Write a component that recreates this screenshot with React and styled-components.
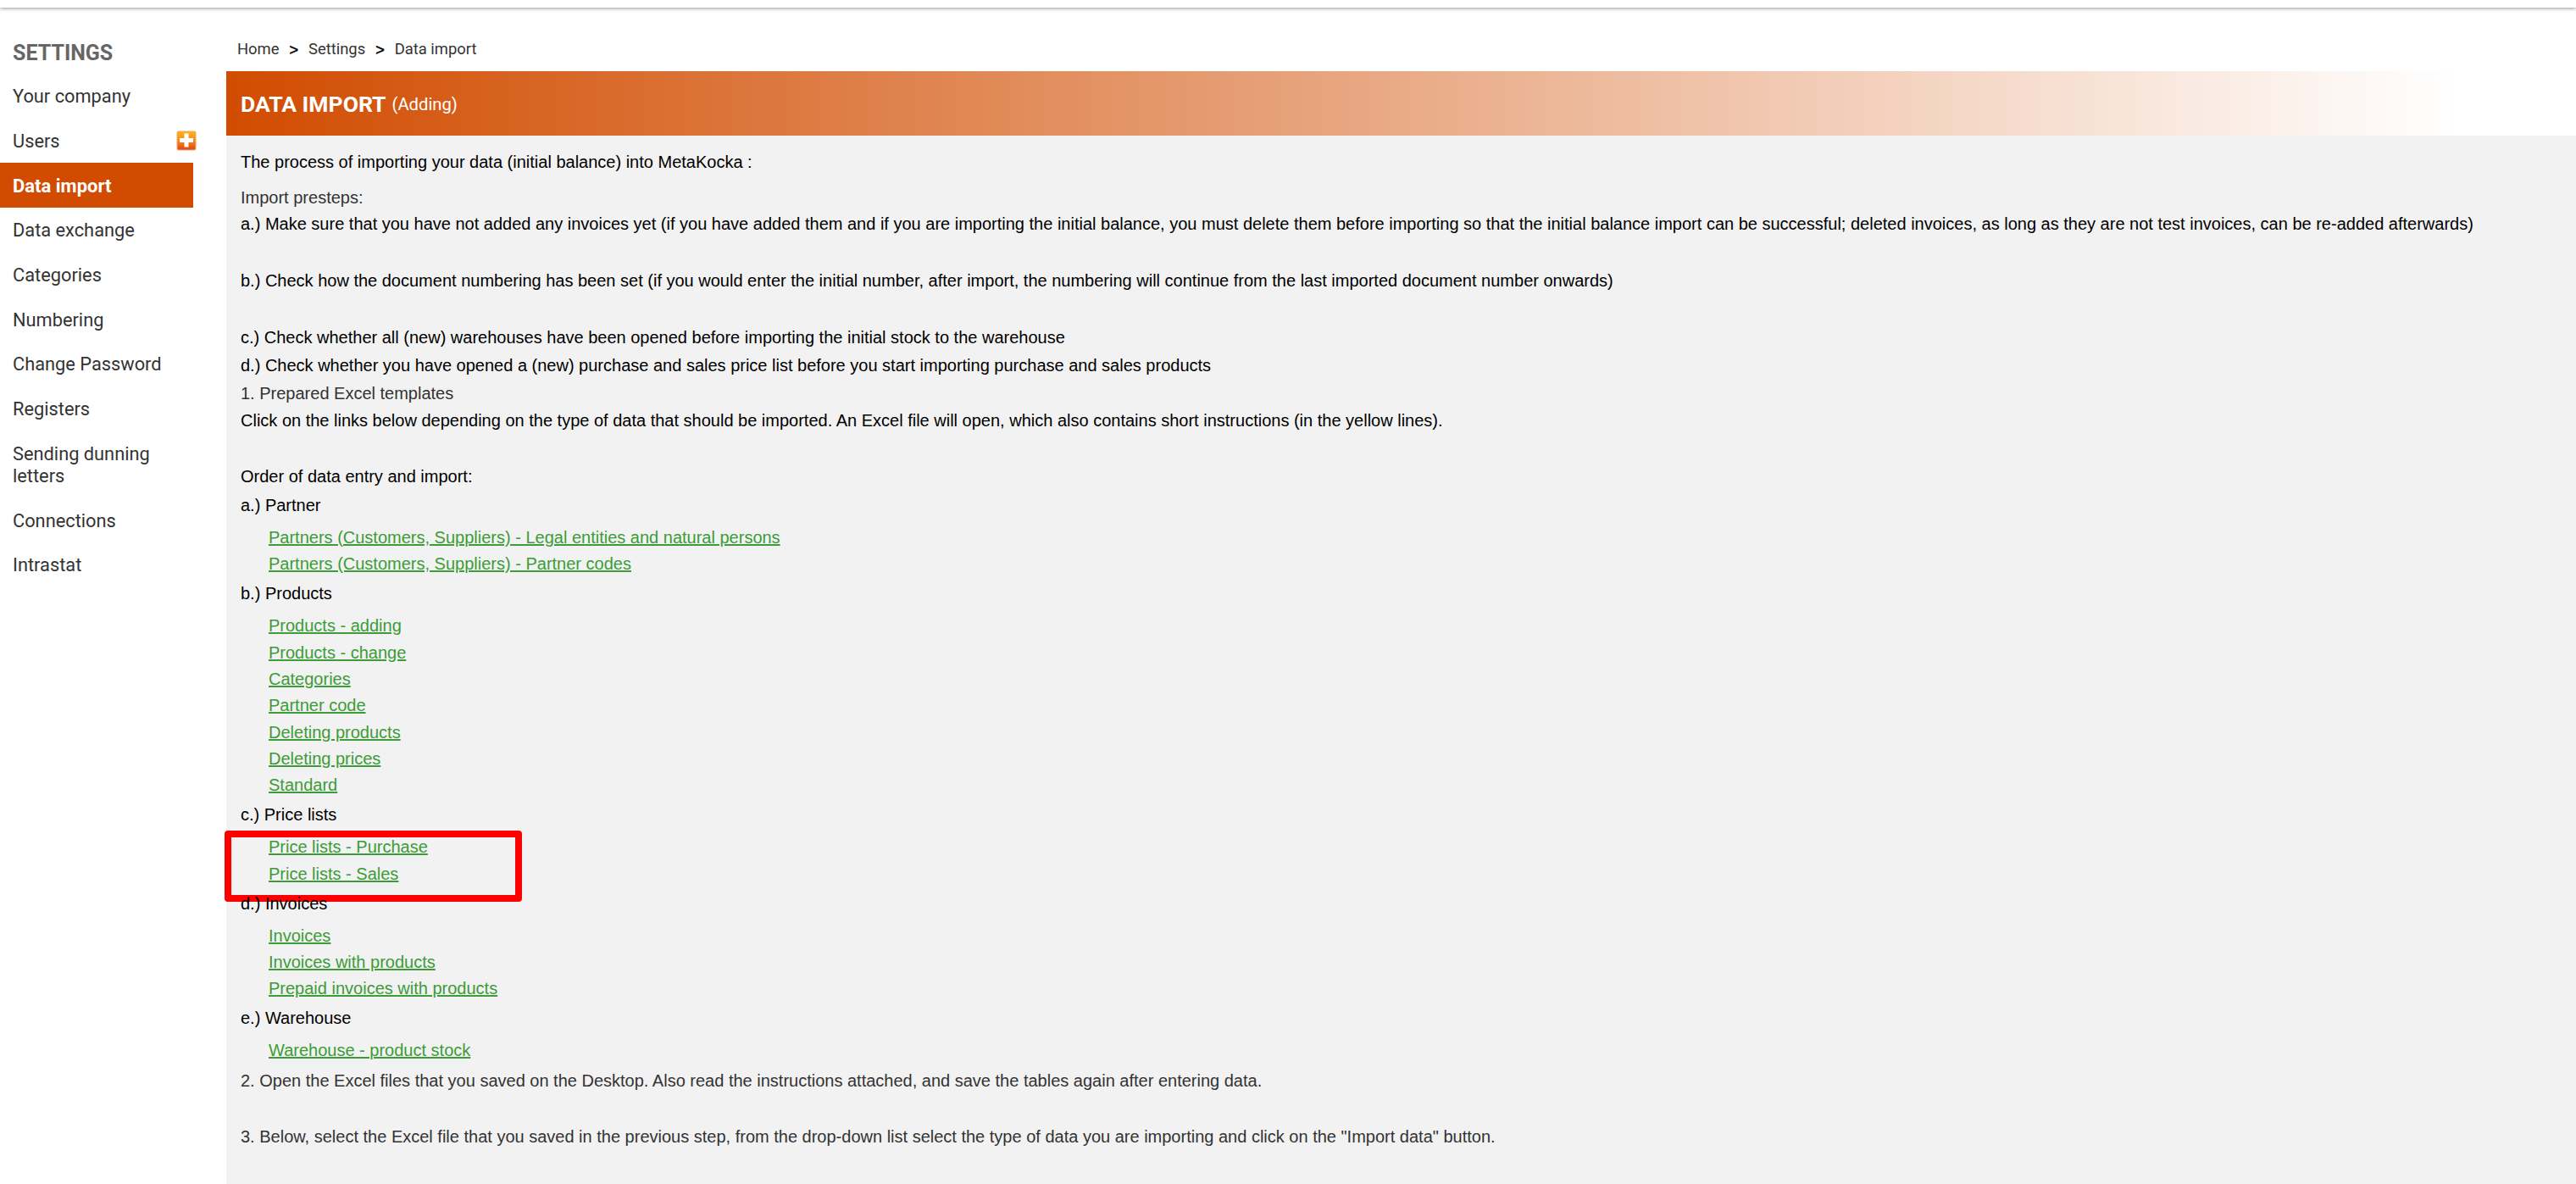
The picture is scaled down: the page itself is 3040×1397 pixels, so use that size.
import React from "react";
import styled, { createGlobalStyle } from "styled-components";

const menu = [
  { name: "Your company" },
  { name: "Users", add: true },
  { name: "Data import", active: true },
  { name: "Data exchange" },
  { name: "Categories" },
  { name: "Numbering" },
  { name: "Change Password" },
  { name: "Registers" },
  { name: "Sending dunning letters" },
  { name: "Connections" },
  { name: "Intrastat" },
];

const groups = [
  {
    title: "a.) Partner",
    links: [
      "Partners (Customers, Suppliers) - Legal entities and natural persons",
      "Partners (Customers, Suppliers) - Partner codes",
    ],
  },
  {
    title: "b.) Products",
    links: [
      "Products - adding",
      "Products - change",
      "Categories",
      "Partner code",
      "Deleting products",
      "Deleting prices",
      "Standard",
    ],
  },
  {
    title: "c.) Price lists",
    links: ["Price lists - Purchase", "Price lists - Sales"],
    marked: true,
  },
  {
    title: "d.) Invoices",
    links: [
      "Invoices",
      "Invoices with products",
      "Prepaid invoices with products",
    ],
  },
  { title: "e.) Warehouse", links: ["Warehouse - product stock"] },
];

const AddIcon = () => {
  return (
    <svg width="24" height="24" viewBox="0 0 24 24">
      <defs>
        <linearGradient id="add-bg" x1="0" y1="0" x2="0" y2="1">
          <stop offset="0" stopColor="#fdb515" />
          <stop offset="0.5" stopColor="#f68a1c" />
          <stop offset="1" stopColor="#dc4a10" />
        </linearGradient>
      </defs>
      <rect x="0.5" y="0.5" width="23" height="23" rx="2.5" fill="#f3a469" />
      <rect x="1.5" y="1.5" width="21" height="21" rx="1.5" fill="url(#add-bg)" />
      <path d="M9.5 3.5h5v5.5h5.5v5h-5.5v5.5h-5v-5.5h-5.5v-5h5.5z" fill="#fff" />
    </svg>
  );
};

const LinkGroup = ({ title, links, marked }) => {
  return (
    <Group>
      <Line $color="#000">{title}</Line>
      <LinkList>
        {links.map((link) => (
          <li key={link}>
            <a href="#">{link}</a>
          </li>
        ))}
      </LinkList>
      {marked ? <Marker /> : null}
    </Group>
  );
};

function App() {
  return (
    <>
      <GlobalStyle />
      <TopBar />
      <Page>
        <Sidebar>
          <h2>Settings</h2>
          {menu.map((item) => (
            <MenuItem key={item.name} $active={item.active}>
              <span>{item.name}</span>
              {item.add ? <AddIcon /> : null}
            </MenuItem>
          ))}
        </Sidebar>
        <Main>
          <Breadcrumb>
            <span>Home</span>
            <b>&gt;</b>
            <span>Settings</span>
            <b>&gt;</b>
            <span>Data import</span>
          </Breadcrumb>
          <Banner>
            <h1>DATA IMPORT</h1>
            <span>(Adding)</span>
          </Banner>
          <Content>
            <Line $color="#000">
              The process of importing your data (initial balance) into
              MetaKocka :
            </Line>
            <Line $top={18}>Import presteps:</Line>
            <Line $top={7} $color="#000">
              a.) Make sure that you have not added any invoices yet (if you
              have added them and if you are importing the initial balance, you
              must delete them before importing so that the initial balance
              import can be successful; deleted invoices, as long as they are
              not test invoices, can be re-added afterwards)
            </Line>
            <Line $top={43} $color="#000">
              b.) Check how the document numbering has been set (if you would
              enter the initial number, after import, the numbering will
              continue from the last imported document number onwards)
            </Line>
            <Line $top={43} $color="#000">
              c.) Check whether all (new) warehouses have been opened before
              importing the initial stock to the warehouse
            </Line>
            <Line $top={9} $color="#000">
              d.) Check whether you have opened a (new) purchase and sales price
              list before you start importing purchase and sales products
            </Line>
            <Line $top={9}>1. Prepared Excel templates</Line>
            <Line $top={8} $color="#000">
              Click on the links below depending on the type of data that should
              be imported. An Excel file will open, which also contains short
              instructions (in the yellow lines).
            </Line>
            <Line $top={42} $color="#000">
              Order of data entry and import:
            </Line>
            {groups.map((group) => (
              <LinkGroup key={group.title} {...group} />
            ))}
            <Line $top={7.6}>
              2. Open the Excel files that you saved on the Desktop. Also read
              the instructions attached, and save the tables again after
              entering data.
            </Line>
            <Line $top={42}>
              3. Below, select the Excel file that you saved in the previous
              step, from the drop-down list select the type of data you are
              importing and click on the "Import data" button.
            </Line>
          </Content>
        </Main>
      </Page>
    </>
  );
}

const GlobalStyle = createGlobalStyle`
  * {
    box-sizing: border-box;
  }
  body {
    margin: 0;
    background: #fff;
    overflow: hidden;
  }
  h1, h2, p, ul {
    margin: 0;
    padding: 0;
  }
`;

const TopBar = styled.header`
  height: 9px;
  background: #fff;
  box-shadow: 0 1px 4px rgba(0, 0, 0, 0.42);
`;

const Page = styled.div`
  display: flex;
  height: 1388px;
  font-family: Roboto, sans-serif;
`;

const Sidebar = styled.nav`
  width: 267px;
  flex-shrink: 0;
  padding-top: 40px;
  h2 {
    padding-left: 15px;
    margin-bottom: 10px;
    font-size: 25px;
    line-height: 28px;
    font-weight: 700;
    text-transform: uppercase;
    color: #666;
  }
`;

const MenuItem = styled.div`
  display: flex;
  align-items: center;
  justify-content: space-between;
  width: ${(props) => (props.$active ? "228px" : "232px")};
  padding: 14.35px 0 12.35px 15px;
  font-size: ${(props) => (props.$active ? "22px" : "21.8px")};
  line-height: 26px;
  font-weight: ${(props) => (props.$active ? "700" : "400")};
  color: ${(props) => (props.$active ? "#fff" : "#333")};
  background: ${(props) => (props.$active ? "#d14b00" : "transparent")};
  span {
    max-width: 180px;
  }
  svg {
    margin-top: -2px;
  }
`;

const Main = styled.main`
  flex: 1;
  display: flex;
  flex-direction: column;
`;

const Breadcrumb = styled.div`
  display: flex;
  gap: 12px;
  height: 75px;
  padding: 38px 0 0 13px;
  font-size: 18.4px;
  line-height: 22px;
  color: #333;
  b {
    font-family: "Liberation Sans", Arial, sans-serif;
    font-size: 18px;
    line-height: 24px;
    font-weight: 400;
    color: #000;
    -webkit-text-stroke: 0.5px #000;
  }
`;

const Banner = styled.div`
  display: flex;
  gap: 7px;
  height: 76px;
  padding: 24px 0 0 17px;
  line-height: 30px;
  color: #fff;
  background: linear-gradient(to right, #d14c00, #fff 2630px);
  h1 {
    font-size: 26.5px;
    line-height: 30px;
    font-weight: 700;
  }
  span {
    font-size: 20.2px;
    line-height: 30px;
  }
`;

const Content = styled.section`
  flex: 1;
  padding: 19px 0 0 17px;
  background: #f2f2f2;
  font-family: "Liberation Sans", Arial, sans-serif;
  font-size: 20px;
  line-height: 24px;
`;

const Line = styled.p`
  margin-top: ${(props) => props.$top || 0}px;
  color: ${(props) => props.$color || "#333"};
  white-space: nowrap;
`;

const Group = styled.div`
  position: relative;
  padding-top: 10px;
  & + & {
    padding-top: 6.7px;
  }
`;

const LinkList = styled.ul`
  padding: 11.1px 0 0 33px;
  list-style: none;
  li {
    height: 31.3px;
    line-height: 31.3px;
    white-space: nowrap;
  }
  a {
    color: #3c9c37;
    text-decoration: underline;
    text-decoration-thickness: 2px;
  }
`;

/* hand drawn highlight lying over the price list links */
const Marker = styled.div`
  position: absolute;
  left: -19px;
  top: 37px;
  width: 351px;
  height: 84px;
  border: 8px solid #ff0000;
  border-radius: 4px;
`;

export default App;
